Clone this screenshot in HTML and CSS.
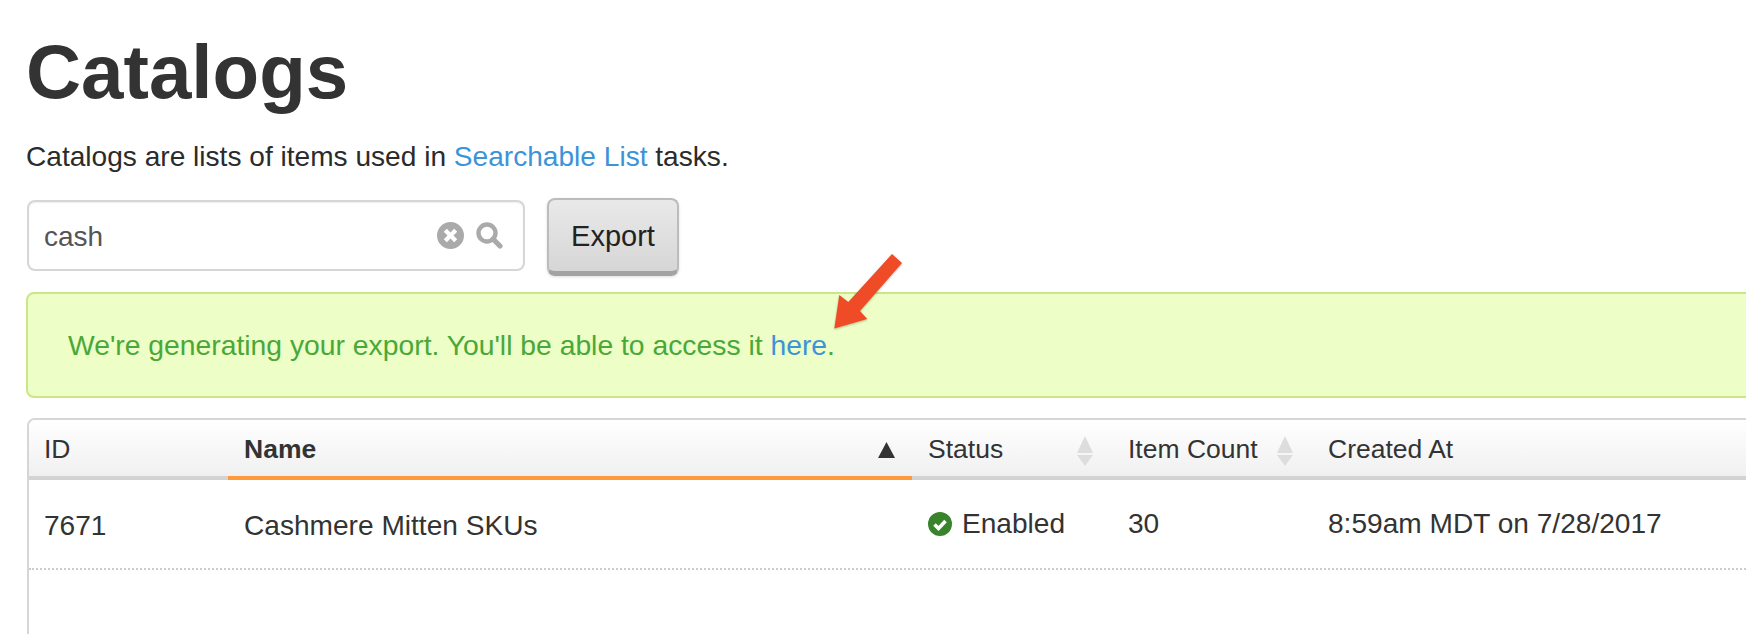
FILE: index.html
```html
<!DOCTYPE html>
<html lang="en">
<head>
<meta charset="utf-8">
<title>Catalogs</title>
<link rel="stylesheet" href="styles.css">
</head>
<body>
<main class="page">
  <h1 class="title">Catalogs</h1>
  <p class="intro">Catalogs are lists of items used in <a href="#">Searchable List</a> tasks.</p>
  <div class="toolbar">
    <div class="search">
      <span class="search-text">cash</span>
      <svg class="icon-clear" viewBox="0 0 27 27"><path fill="#aaa" fill-rule="evenodd" d="M13.500 0a13.500 13.500 0 1 1 0 27a13.500 13.500 0 0 1 0-27zM6.800 9.800l3.700 3.700l-3.700 3.700l3 3l3.700-3.700l3.700 3.700l3-3l-3.700-3.700l3.700-3.700l-3-3l-3.700 3.700l-3.700-3.700z"/></svg>
      <svg class="icon-search" viewBox="0 0 27 27"><circle cx="11" cy="11" r="8.500" fill="none" stroke="#aaa" stroke-width="4.400"/><path d="M17 17l7 7" stroke="#aaa" stroke-width="5.200" stroke-linecap="round"/></svg>
    </div>
    <button class="export" type="button">Export</button>
  </div>
  <div class="alert">We're generating your export. You'll be able to access it&nbsp;<a href="#">here</a>.</div>
  <section class="grid">
    <div class="row head">
      <div class="cell first">ID</div>
      <div class="cell sorted"><b>Name</b>
        <svg class="sort-on" viewBox="0 0 17 16"><path fill="#333" d="M8.500 0L17 16H0z"/></svg>
      </div>
      <div class="cell">Status
        <svg class="sort" viewBox="0 0 16 30"><path fill="#ddd" d="M8 0L16 17H0zM0 19H16L8 30z"/></svg>
      </div>
      <div class="cell">Item Count
        <svg class="sort" viewBox="0 0 16 30"><path fill="#ddd" d="M8 0L16 17H0zM0 19H16L8 30z"/></svg>
      </div>
      <div class="cell">Created At</div>
    </div>
    <div class="row body">
      <div class="cell first lowered">7671</div>
      <div class="cell lowered">Cashmere Mitten SKUs</div>
      <div class="cell status">
        <svg class="icon-ok" viewBox="0 0 24 24"><circle cx="12" cy="12" r="12" fill="#38842a"/><path d="M6.500 12.500l4 4l7-7.500" fill="none" stroke="#fff" stroke-width="3.600"/></svg>
        Enabled
      </div>
      <div class="cell">30</div>
      <div class="cell">8:59am MDT on 7/28/2017</div>
    </div>
  </section>
</main>
<svg class="arrow" viewBox="0 0 180 110"><path fill="#ee4b26" d="M112 14L122 23L80 71L87.300 79L54.300 88.500L59.300 55L68.300 62z"/></svg>
</body>
</html>
```

FILE: styles.css
```css
html, body { margin: 0; height: 100%; overflow: hidden; background: #fff; }
body { font-family: "Liberation Sans", Arial, sans-serif; color: #333; font-size: 28.1px; position: relative; }
a { color: #3d93d8; text-decoration: none; }
.page { width: 1900px; padding-left: 26px; box-sizing: border-box; }
.title { margin: 0; padding-top: 28px; font-size: 76.300px; line-height: 88px; font-weight: 700; color: #333; }
.intro { margin: 24px 0 0; line-height: 34px; color: #2b2b2b; font-size: 28.1px; }
.toolbar { display: flex; align-items: flex-start; gap: 22px; margin-top: 24px; margin-left: 1px; }
.search { width: 498px; height: 71px; margin-top: 2px; box-sizing: border-box; border: 2px solid #d6d6d6; border-radius: 8px; display: flex; align-items: center; padding: 0 20px 0 15px; box-shadow: inset 0 1px 2px #eee; }
.search-text { flex: 1; color: #555; font-size: 28px; padding-top: 2px; }
.icon-clear { width: 27px; height: 27px; margin-right: 12px; }
.icon-search { width: 27px; height: 27px; }
.export { width: 132px; height: 78px; box-sizing: border-box; font: 29px "Liberation Sans", Arial, sans-serif; color: #222; border: 2px solid #bcbcbc; border-bottom: 5px solid #a3a3a3; border-radius: 8px; background: linear-gradient(#e9e9e9, #d6d6d6); box-shadow: 0 1px 3px #ddd; padding: 2px 0 0; }
.alert { margin-top: 16px; height: 106px; box-sizing: border-box; border: 2px solid #cbe686; border-radius: 8px; background: #edfec6; color: #4aa838; display: flex; align-items: center; padding-left: 40px; font-size: 28.3px; }
.grid { margin-top: 20px; margin-left: 1px; height: 300px; box-sizing: border-box; border: 2px solid #d6d6d6; border-radius: 8px; }
.row { display: grid; grid-template-columns: 199px 684px 200px 200px 1fr; }
.head { height: 60px; box-sizing: border-box; background: linear-gradient(#fff, #f0f0f0); border-bottom: 4px solid #d3d3d3; border-radius: 6px 6px 0 0; font-size: 26.500px; }
.head .cell { padding-top: 2px; }
.body { height: 90px; box-sizing: border-box; border-bottom: 2px dotted #ccc; }
.cell { display: flex; align-items: center; padding-left: 16px; position: relative; }
.first { padding-left: 15px; }
.lowered { padding-top: 3px; }
.sorted { margin-bottom: -4px; border-bottom: 4px solid #ff9a3c; }
.sorted b { font-weight: 700; }
.sort-on { position: absolute; right: 17px; top: 22px; width: 17px; height: 16px; }
.sort { position: absolute; right: 19px; top: 16px; width: 16px; height: 30px; }
.status { gap: 10px; }
.icon-ok { width: 24px; height: 24px; }
.arrow { position: absolute; left: 780px; top: 240px; width: 180px; height: 110px; filter: drop-shadow(0 1px 1px rgba(0,0,0,.25)); }
```
